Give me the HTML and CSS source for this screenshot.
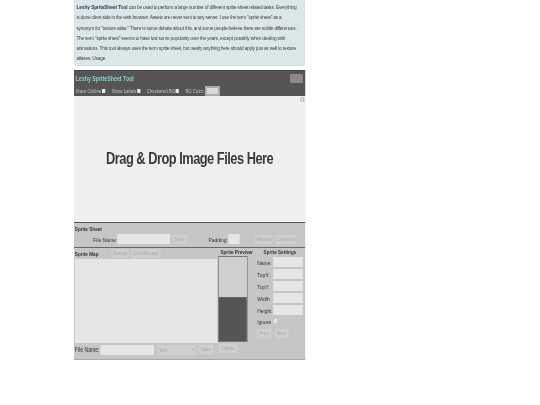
FILE: index.html
```html
<!DOCTYPE html>
<html lang="en">
<head>
    <meta charset="UTF-8">
    <title>Leshy SpriteSheet Tool</title>
    <link rel="stylesheet" href="styles.css">
</head>
<body>
    <div class="page">
        <div class="info">
            <b>Leshy SpriteSheet Tool</b> can be used to perform a large number of different sprite sheet related tasks. Everything<br>
            is done client side in the web browser. Assets are never sent to any server. I use the term "sprite sheet" as a<br>
            synonym for "texture atlas." There is some debate about this, and some people believe there are subtle differences.<br>
            The term "sprite sheet" seems to have lost some popularity over the years, except possibly when dealing with<br>
            animations. This tool always uses the term sprite sheet, but nearly anything here should apply just as well to texture<br>
            atlases. Usage
        </div>

        <div class="app">
            <div class="titlebar">
                <span class="title">Leshy SpriteSheet Tool</span>
                <span class="title-btn"></span>
            </div>
            <div class="toolbar">
                <span class="opt">Show Outline<i class="check"></i></span>
                <span class="opt">Show Labels<i class="check"></i></span>
                <span class="opt">Checkered BG<i class="check"></i></span>
                <span class="opt">BG Color:<i class="swatch"></i></span>
            </div>
            <div class="canvas">
                <span class="zoom-icon"></span>
                <h1>Drag &amp; Drop Image Files Here</h1>
            </div>

            <div class="sheet">
                <div class="label">Sprite Sheet</div>
                <div class="sheet-row">
                    <span class="sheet-name">File Name:</span>
                    <span class="field sheet-file"></span>
                    <span class="btn sheet-save">Save</span>
                    <span class="sheet-pad">Padding:</span>
                    <span class="field pad-field"></span>
                    <span class="btn repack">Repack</span>
                    <span class="btn optimize">Optimize</span>
                </div>
            </div>

            <div class="lower">
                <div class="map">
                    <div class="map-head">
                        <span class="label">Sprite Map</span>
                        <span class="btn remap">Remap</span>
                        <span class="btn grid-remap">Grid Remap</span>
                    </div>
                    <div class="map-area"></div>
                    <div class="map-foot">
                        <span>File Name:</span>
                        <span class="field foot-file"></span>
                        <span class="select">Text<i class="arrow"></i></span>
                        <span class="btn foot-save">Save</span>
                    </div>
                </div>

                <div class="preview">
                    <div class="label">Sprite Preview</div>
                    <div class="preview-box">
                        <div class="preview-top"></div>
                        <div class="preview-bottom"></div>
                    </div>
                    <span class="btn delete">Delete</span>
                </div>

                <div class="settings">
                    <div class="label">Sprite Settings</div>
                    <div class="set-row"><span>Name:</span><i class="field"></i></div>
                    <div class="set-row"><span>TopX:</span><i class="field"></i></div>
                    <div class="set-row"><span>TopY:</span><i class="field"></i></div>
                    <div class="set-row"><span>Width</span><i class="field"></i></div>
                    <div class="set-row"><span>Height</span><i class="field"></i></div>
                    <div class="ignore"><span>Ignore</span><i class="check"></i></div>
                    <div class="set-btns">
                        <span class="btn">Prev</span>
                        <span class="btn">Next</span>
                    </div>
                </div>
            </div>
        </div>
    </div>
</body>
</html>
```

FILE: styles.css
```css
html, body { margin: 0; padding: 0; background: #fff; }
body { font-family: "Liberation Sans", Arial, sans-serif; font-size: 6.2px; color: #333; width: 540px; height: 405px; overflow: hidden; }
/* the shot is squeezed sideways, so the page is laid out wider and narrowed */
.page { width: 289px; margin-left: 74px; transform: scaleX(0.8); transform-origin: left top; filter: blur(0.3px); }
.info { height: 66px; box-sizing: border-box; padding: 2px 2px 0 2px; background: #dbe6e9; border-radius: 0 0 3px 3px; border: 1px solid #cfdcdf; border-top: none; font-size: 6px; letter-spacing: -0.27px; line-height: 10.3px; color: #444; white-space: nowrap; }
.info b { color: #223c46; letter-spacing: -0.1px; }

.app { margin-top: 4px; height: 288px; display: flex; flex-direction: column; background: #c6c6c6; border-top: 1px solid #444; border-bottom: 1px solid #aaa; white-space: nowrap; }
.titlebar { height: 15px; flex: none; background: #555; display: flex; align-items: center; justify-content: space-between; padding: 0 2px; }
.title { color: #8fcfca; font-weight: bold; font-size: 6.6px; }
.title-btn { width: 16px; height: 9px; background: #8a8a8a; margin-right: 1px; }
.toolbar { height: 10px; flex: none; background: #555; display: flex; align-items: center; padding-left: 2px; color: #c4c4c4; font-size: 5.4px; gap: 8px; }
.opt { display: flex; align-items: center; gap: 1px; }
.check { width: 4px; height: 4px; background: #e8e8e8; display: inline-block; flex: none; }
.swatch { width: 18px; height: 10px; background: #d9d9d9; border: 2px solid #aaa; box-sizing: border-box; display: inline-block; }

.canvas { height: 127px; flex: none; background: #f0f0f0; position: relative; display: flex; align-items: center; justify-content: center; border-bottom: 1px solid #555; box-sizing: border-box; }
.canvas h1 { margin: 0; font-size: 16px; font-weight: bold; color: #3a3a3a; letter-spacing: -0.6px; }
.zoom-icon { position: absolute; top: 1px; right: 1px; width: 3px; height: 3px; border: 1px solid #999; border-radius: 50%; }

.sheet { height: 25px; flex: none; box-sizing: border-box; padding: 3px 1px 0; border-bottom: 1px solid #666; }
.label { font-weight: bold; color: #333; font-size: 5.8px; }
.sheet-row { display: flex; align-items: center; margin-top: 2px; height: 10px; }
.sheet-name { width: 53px; text-align: right; }
.sheet-pad { width: 24px; margin-left: 27px; }
.field { display: inline-block; height: 10px; background: #e6e6e6; flex: none; }
.sheet-file { width: 66px; }
.pad-field { width: 14px; margin-left: 1px; }
.btn { display: inline-block; height: 9px; line-height: 9px; padding: 0 2px; background: #cfcfcf; color: #a9a9a9; flex: none; font-size: 5.8px; text-align: center; box-sizing: border-box; }
.sheet-save { width: 18px; margin-left: 3px; }
.repack { width: 22px; margin-left: 19px; }
.optimize { width: 26px; margin-left: 4px; }

.lower { flex: 1; display: flex; }
.map { width: 180px; flex: none; display: flex; flex-direction: column; padding-left: 1px; box-sizing: border-box; }
.map-head { height: 11px; display: flex; align-items: center; }
.remap { width: 21px; margin-left: 16px; }
.grid-remap { width: 36px; margin-left: 4px; }
.map-area { height: 84px; width: 178px; background: #e6e6e6; }
.map-foot { display: flex; align-items: center; height: 11px; margin-top: 1px; font-size: 6.4px; }
.foot-file { width: 67px; margin-left: 1px; }
.select { display: inline-flex; align-items: center; justify-content: space-between; width: 48px; height: 10px; margin-left: 4px; padding: 0 2px; box-sizing: border-box; background: #cfcfcf; color: #a9a9a9; font-size: 5.8px; }
.arrow { width: 0; height: 0; border-left: 1.5px solid transparent; border-right: 1.5px solid transparent; border-top: 2px solid #a0a0a0; }
.foot-save { width: 18px; margin-left: 4px; }

.preview { width: 47px; flex: none; padding-top: 1px; box-sizing: border-box; }
.preview .label { margin-left: 3px; }
.preview-box { width: 37px; height: 86px; margin-top: 1px; border: 1px solid #777; box-sizing: border-box; }
.preview-top { height: 41px; background: #cfcfcf; border-bottom: 1px solid #666; box-sizing: border-box; }
.preview-bottom { height: 43px; background: #555; }
.delete { width: 23px; margin: 2px 0 0 1px; display: block; }

.settings { flex: 1; padding-top: 1px; }
.settings .label { margin-left: 10px; }
.set-row { display: flex; align-items: center; justify-content: space-between; height: 10px; margin-top: 2px; padding: 0 3px 0 2px; }
.set-row:first-of-type { margin-top: 1px; }
.set-row .field { width: 37px; }
.ignore { display: flex; align-items: center; gap: 3px; height: 10px; margin-top: 1px; padding-left: 2px; }
.ignore .check { background: #e6e6e6; }
.set-btns { display: flex; gap: 5px; padding: 3px 0 0 2px; }
.set-btns .btn { width: 17px; }
```
